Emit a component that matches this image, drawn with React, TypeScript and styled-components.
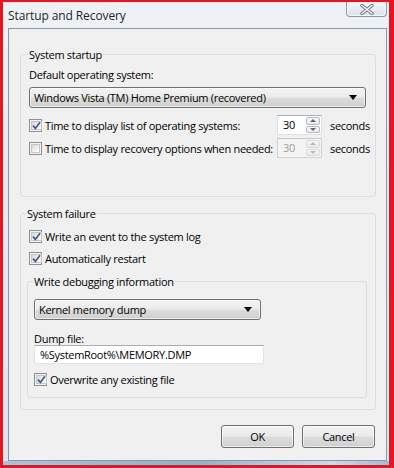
import styled, { createGlobalStyle } from "styled-components";
import type { ReactNode } from "react";

const GlobalStyle = createGlobalStyle`
  *, *::before, *::after { box-sizing: border-box; }
  html, body { margin: 0; padding: 0; }
  body {
    font-family: "Open Sans", "Noto Sans", sans-serif;
    font-size: 11px;
    letter-spacing: -0.3px;
    color: #000;
  }
`;

const Screen = styled.div`
  width: 394px;
  height: 468px;
  border-style: solid;
  border-color: #e5161d;
  border-width: 2px 5px 3px 3px;
  display: flex;
`;

const Frame = styled.div`
  flex: 1;
  min-width: 0;
  display: flex;
  flex-direction: column;
  background: linear-gradient(180deg, #eef2f6 0%, #e4eaf0 40%, #dde5ed 100%);
`;

const TitleBar = styled.div`
  height: 26px;
  display: flex;
  justify-content: space-between;
  align-items: center;
  padding-left: 5px;
`;

const Title = styled.span`
  font-size: 12px;
  letter-spacing: -0.1px;
  color: #1c2430;
  text-shadow: 0 0 6px rgba(255, 255, 255, 0.9);
`;

const CloseButton = styled.div`
  align-self: flex-start;
  width: 41px;
  height: 15px;
  margin-right: 2px;
  display: flex;
  align-items: center;
  justify-content: center;
  border: 1px solid #8d99a8;
  border-top: none;
  border-radius: 0 0 4px 4px;
  background: linear-gradient(180deg, #f4f7fa 0%, #e6ebf1 55%, #dbe2ea 100%);
  box-shadow: inset 0 0 0 1px rgba(255, 255, 255, 0.7);
`;

const Client = styled.div`
  flex: 1;
  min-width: 0;
  margin: 0 2px 0 5px;
  border: 1px solid #8797a9;
  background: #f0f0f0;
  padding: 18px 10px 10px 11px;
  display: flex;
  flex-direction: column;
`;

const BottomEdge = styled.div`
  height: 4px;
  background: linear-gradient(90deg, #a9c3dc 0%, #8fb1d2 50%, #c9dbeb 85%, #9fbcd8 100%);
`;

const Group = styled.fieldset<{ $left: number; $right: number; $top: number; $bottom: number; $gap?: number }>`
  margin: ${({ $gap }) => $gap ?? 0}px 0 0 0;
  border: 1px solid #d5dfe5;
  border-radius: 3px;
  padding: ${({ $top, $right, $bottom, $left }) => `${$top}px ${$right}px ${$bottom}px ${$left}px`};
  display: flex;
  flex-direction: column;
  min-width: 0;
`;

const Legend = styled.legend`
  padding: 0 1px;
  margin-left: -1px;
  line-height: 15px;
`;

const FieldLabel = styled.div<{ $gap?: number }>`
  line-height: 14px;
  margin-top: ${({ $gap }) => $gap ?? 0}px;
`;

const Dropdown = styled.div<{ $width?: number; $gap: number }>`
  width: ${({ $width }) => ($width ? `${$width}px` : "100%")};
  height: 21px;
  margin-top: ${({ $gap }) => $gap}px;
  border: 1px solid #707070;
  border-radius: 3px;
  background: linear-gradient(180deg, #f3f3f3 0%, #ebebeb 48%, #dddddd 52%, #cfcfcf 100%);
  box-shadow: inset 0 0 0 1px rgba(255, 255, 255, 0.6);
  display: flex;
  align-items: center;
  justify-content: space-between;
  padding: 0 8px 0 4px;
`;

const Arrow = styled.span`
  width: 0;
  height: 0;
  border-left: 4px solid transparent;
  border-right: 4px solid transparent;
  border-top: 5px solid #000;
`;

const TimeoutGrid = styled.div`
  margin-top: 7px;
  display: grid;
  grid-template-columns: 240px 45px max-content;
  column-gap: 8px;
  row-gap: 3px;
  align-items: center;
`;

const CheckRow = styled.div<{ $gap?: number; $indent?: number }>`
  display: flex;
  align-items: center;
  gap: 3px;
  height: 16px;
  margin-top: ${({ $gap }) => $gap ?? 0}px;
  margin-left: ${({ $indent }) => $indent ?? 0}px;
  white-space: nowrap;
`;

const Box = styled.span`
  width: 13px;
  height: 13px;
  flex: none;
  border: 1px solid #8e8f8f;
  background: #f4f4f4;
  padding: 1px;
  display: flex;
`;

const BoxInner = styled.span`
  flex: 1;
  border: 1px solid #c5c5c5;
  background: linear-gradient(135deg, #d9d9d9 0%, #f0f0f0 60%, #ffffff 100%);
  display: flex;
  align-items: center;
  justify-content: center;
`;

const Spin = styled.div<{ $disabled?: boolean }>`
  width: 45px;
  height: 20px;
  display: flex;
  align-items: stretch;
  border: 1px solid ${({ $disabled }) => ($disabled ? "#d2d2d2" : "#dbdfe6")};
  border-top-color: ${({ $disabled }) => ($disabled ? "#c9c9c9" : "#abadb3")};
  background: ${({ $disabled }) => ($disabled ? "#f4f4f4" : "#fff")};
  color: ${({ $disabled }) => ($disabled ? "#9c9c9c" : "#000")};
`;

const SpinValue = styled.span`
  flex: 1;
  padding-left: 5px;
  line-height: 18px;
`;

const SpinButtons = styled.div`
  width: 15px;
  display: flex;
  flex-direction: column;
  gap: 1px;
  padding: 1px 1px 1px 0;
`;

const SpinPart = styled.span<{ $disabled?: boolean; $down?: boolean }>`
  flex: 1;
  border: 1px solid ${({ $disabled }) => ($disabled ? "#dadada" : "#b6b9c0")};
  border-radius: 2px;
  background: linear-gradient(180deg, #f7f7f7 0%, #e9e9e9 100%);
  display: flex;
  align-items: center;
  justify-content: center;
  &::after {
    content: "";
    border-left: 3px solid transparent;
    border-right: 3px solid transparent;
    ${({ $down, $disabled }) =>
      $down
        ? `border-top: 3px solid ${$disabled ? "#b9b9b9" : "#58688a"};`
        : `border-bottom: 3px solid ${$disabled ? "#b9b9b9" : "#58688a"};`}
  }
`;

const TextBox = styled.div`
  width: 230px;
  height: 19px;
  margin-top: -1px;
  border: 1px solid #e2e3ea;
  border-top-color: #abadb3;
  background: #fff;
  padding-left: 5px;
  line-height: 17px;
`;

const ButtonRow = styled.div`
  margin-top: 15px;
  padding-right: 1px;
  display: flex;
  justify-content: flex-end;
  gap: 8px;
`;

const PushButton = styled.div`
  width: 73px;
  height: 23px;
  border: 1px solid #707070;
  border-radius: 3px;
  background: linear-gradient(180deg, #f2f2f2 0%, #ebebeb 48%, #dddddd 52%, #cfcfcf 100%);
  box-shadow: inset 0 0 0 1px rgba(255, 255, 255, 0.6);
  display: flex;
  align-items: center;
  justify-content: center;
`;

const Spacer = styled.div<{ $h: number }>`
  height: ${({ $h }) => $h}px;
  flex: none;
`;

function Check({ checked, children, gap, indent }: { checked?: boolean; children: ReactNode; gap?: number; indent?: number }) {
  return (
    <CheckRow $gap={gap} $indent={indent}>
      <Box>
        <BoxInner>
          {checked && (
            <svg width="9" height="9" viewBox="0 0 9 9">
              <path d="M1 4.6 L3.4 7.4 L8 1.2" fill="none" stroke="#44578e" strokeWidth="1.7" />
            </svg>
          )}
        </BoxInner>
      </Box>
      <span>{children}</span>
    </CheckRow>
  );
}

function Spinner({ value, disabled }: { value: string; disabled?: boolean }) {
  return (
    <Spin $disabled={disabled}>
      <SpinValue>{value}</SpinValue>
      <SpinButtons>
        <SpinPart $disabled={disabled} />
        <SpinPart $disabled={disabled} $down />
      </SpinButtons>
    </Spin>
  );
}

export default function App() {
  return (
    <Screen>
      <GlobalStyle />
      <Frame>
        <TitleBar>
          <Title>Startup and Recovery</Title>
          <CloseButton>
            <svg width="14" height="11" viewBox="0 0 14 11">
              <path d="M2 1.5 L12 9.5 M12 1.5 L2 9.5" stroke="#6d7886" strokeWidth="3.4" strokeLinecap="round" />
              <path d="M2 1.5 L12 9.5 M12 1.5 L2 9.5" stroke="#f7f9fb" strokeWidth="1.5" strokeLinecap="round" />
            </svg>
          </CloseButton>
        </TitleBar>
        <Client>
          <Group $left={8} $right={9} $top={6} $bottom={38}>
            <Legend>System startup</Legend>
            <FieldLabel>Default operating system:</FieldLabel>
            <Dropdown $gap={5}>
              <span>Windows Vista (TM) Home Premium (recovered)</span>
              <Arrow />
            </Dropdown>
            <TimeoutGrid>
              <Check checked>Time to display list of operating systems:</Check>
              <Spinner value="30" />
              <span>seconds</span>
              <Check>Time to display recovery options when needed:</Check>
              <Spinner value="30" disabled />
              <span>seconds</span>
            </TimeoutGrid>
          </Group>

          <Group $left={6} $right={8} $top={7} $bottom={11} $gap={9}>
            <Legend>System failure</Legend>
            <Check checked indent={2}>Write an event to the system log</Check>
            <Check checked indent={2} gap={6}>Automatically restart</Check>
            <Spacer $h={8} />
            <Group $left={6} $right={6} $top={10} $bottom={10}>
              <Legend>Write debugging information</Legend>
              <Dropdown $width={227} $gap={0}>
                <span>Kernel memory dump</span>
                <Arrow />
              </Dropdown>
              <FieldLabel $gap={12}>Dump file:</FieldLabel>
              <TextBox>%SystemRoot%\MEMORY.DMP</TextBox>
              <Check checked gap={7}>Overwrite any existing file</Check>
            </Group>
          </Group>

          <ButtonRow>
            <PushButton>OK</PushButton>
            <PushButton>Cancel</PushButton>
          </ButtonRow>
        </Client>
        <BottomEdge />
      </Frame>
    </Screen>
  );
}
